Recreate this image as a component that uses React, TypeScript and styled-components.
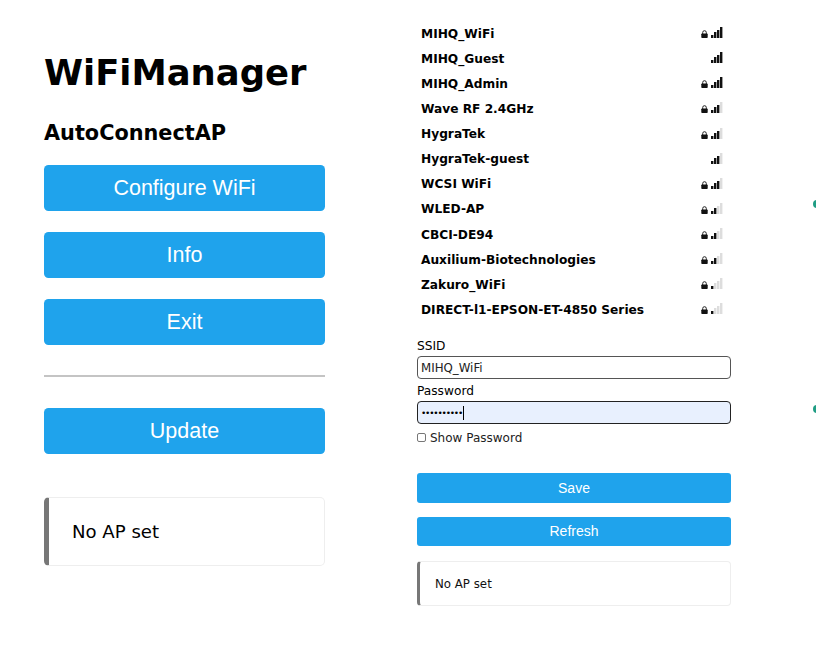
import React from 'react';
import styled, { createGlobalStyle } from 'styled-components';

const GlobalStyle = createGlobalStyle`
  html, body {
    margin: 0;
    padding: 0;
    background: #fff;
    overflow: hidden;
  }
  body {
    font-family: "DejaVu Sans", Verdana, sans-serif;
    color: #000;
  }
`;

const networks = [
  { name: 'MIHQ_WiFi', locked: true, level: 4 },
  { name: 'MIHQ_Guest', locked: false, level: 4 },
  { name: 'MIHQ_Admin', locked: true, level: 4 },
  { name: 'Wave RF 2.4GHz', locked: true, level: 3 },
  { name: 'HygraTek', locked: true, level: 3 },
  { name: 'HygraTek-guest', locked: false, level: 3 },
  { name: 'WCSI WiFi', locked: true, level: 3 },
  { name: 'WLED-AP', locked: true, level: 2 },
  { name: 'CBCI-DE94', locked: true, level: 2 },
  { name: 'Auxilium-Biotechnologies', locked: true, level: 2 },
  { name: 'Zakuro_WiFi', locked: true, level: 1 },
  { name: 'DIRECT-l1-EPSON-ET-4850 Series', locked: true, level: 1 },
];

const Page = styled.div`
  position: relative;
  width: 816px;
  height: 645px;
  display: flex;
  gap: 92px;
  padding-left: 44px;
  box-sizing: border-box;
  overflow: hidden;
`;

const LeftColumn = styled.div`
  width: 281px;
  padding-top: 50px;
`;

const RightColumn = styled.div`
  width: 314px;
  padding-top: 21px;
`;

const Title = styled.h1`
  margin: 0;
  font-size: 35.4px;
  line-height: 46px;
  font-weight: 700;
`;

const Subtitle = styled.h3`
  margin: 25px 0 20px;
  font-size: 20.8px;
  line-height: 24px;
  font-weight: 700;
`;

const BigButton = styled.button`
  display: block;
  width: 100%;
  height: 45.6px;
  margin: 0 0 21.4px;
  padding: 2px 0 0;
  border: 0;
  border-radius: 4.5px;
  background: #1fa3ec;
  color: #fff;
  font-family: "Liberation Sans", Arial, sans-serif;
  font-size: 21.5px;
`;

const Rule = styled.hr`
  height: 2px;
  margin: 30.9px 0 30.5px;
  border: 0;
  background: #c4c4c4;
`;

const BigMessage = styled.div`
  box-sizing: border-box;
  display: flex;
  align-items: center;
  height: 69px;
  margin-top: 43px;
  padding-left: 23px;
  border: 1px solid #eee;
  border-left: 5px solid #777;
  border-radius: 5px;
  font-size: 18.1px;
`;

const NetworkRow = styled.div`
  display: flex;
  align-items: center;
  justify-content: space-between;
  height: 25.13px;
  padding: 0 8px 0 4px;
`;

const NetworkName = styled.span`
  font-size: 12.2px;
  font-weight: 700;
`;

const SignalIcon = styled.svg`
  display: block;
  width: 22px;
  height: 11px;
  margin-top: -2px;
`;

const Form = styled.div`
  margin-top: 16.5px;
`;

const FieldLabel = styled.label`
  display: block;
  font-size: 12.2px;
  line-height: 15px;
`;

const TextField = styled.input`
  display: block;
  box-sizing: border-box;
  width: 100%;
  height: 23px;
  margin: 2px 0 5px;
  padding: 0 3px;
  border: 1px solid #555;
  border-radius: 4px;
  outline: none;
  background: #fff;
  color: #222;
  font-family: "DejaVu Sans", Verdana, sans-serif;
  font-size: 11.8px;
`;

const PasswordValue = styled.span`
  letter-spacing: -1.2px;
  font-size: 9px;
`;

const Caret = styled.span`
  display: inline-block;
  width: 1px;
  height: 14px;
  margin-left: 1px;
  vertical-align: middle;
  background: #000;
`;

const PasswordField = styled.div`
  box-sizing: border-box;
  display: flex;
  align-items: center;
  height: 23px;
  margin-top: 2px;
  padding: 0 3px;
  border: 1.5px solid #222;
  border-radius: 4px;
  background: #e8f0fe;
`;

const ShowRow = styled.label`
  display: flex;
  align-items: center;
  gap: 4px;
  margin-top: 6.5px;
  font-size: 12px;
  line-height: 15px;
  color: #222;
`;

const Box = styled.span`
  box-sizing: border-box;
  width: 9px;
  height: 9px;
  margin-top: -2px;
  border: 1px solid #777;
  border-radius: 2px;
`;

const SmallButton = styled.button<{ $top: number }>`
  display: block;
  width: 100%;
  height: 29.6px;
  margin: ${(p) => p.$top}px 0 0;
  padding: 0;
  border: 0;
  border-radius: 3px;
  background: #1fa3ec;
  color: #fff;
  font-family: "Liberation Sans", Arial, sans-serif;
  font-size: 14px;
`;

const SmallMessage = styled.div`
  box-sizing: border-box;
  display: flex;
  align-items: center;
  height: 45px;
  margin-top: 15px;
  padding-left: 15px;
  border: 1px solid #eee;
  border-left: 3.5px solid #777;
  border-radius: 4px;
  font-size: 11.8px;
  color: #111;
`;

const EdgeDot = styled.span<{ $top: number }>`
  position: absolute;
  left: 813px;
  top: ${(p) => p.$top}px;
  width: 8px;
  height: 8px;
  border-radius: 50%;
  background: #1f9d84;
`;

const Signal: React.FC<{ locked: boolean; level: number }> = ({ locked, level }) => {
  const bars = [
    { x: 10, y: 8, h: 3 },
    { x: 13, y: 5, h: 6 },
    { x: 16, y: 3, h: 8 },
    { x: 19, y: 0, h: 11 },
  ];
  return (
    <SignalIcon viewBox="0 0 22 11">
      {locked && (
        <g>
          <path d="M1.7 7V5.5a1.8 1.8 0 0 1 3.6 0V7" fill="none" stroke="#222" strokeWidth="1" />
          <rect x="0.3" y="6.5" width="6.4" height="4.5" rx="0.8" fill="#111" />
        </g>
      )}
      {bars.map((b, i) => (
        <rect key={i} x={b.x} y={b.y} width="2.4" height={b.h} fill={i < level ? '#111' : '#ddd'} />
      ))}
    </SignalIcon>
  );
};

const App: React.FC = () => (
  <Page>
    <GlobalStyle />
    <LeftColumn>
      <Title>WiFiManager</Title>
      <Subtitle>AutoConnectAP</Subtitle>
      <BigButton>Configure WiFi</BigButton>
      <BigButton>Info</BigButton>
      <BigButton>Exit</BigButton>
      <Rule />
      <BigButton>Update</BigButton>
      <BigMessage>No AP set</BigMessage>
    </LeftColumn>
    <RightColumn>
      {networks.map((n) => (
        <NetworkRow key={n.name}>
          <NetworkName>{n.name}</NetworkName>
          <Signal locked={n.locked} level={n.level} />
        </NetworkRow>
      ))}
      <Form>
        <FieldLabel>SSID</FieldLabel>
        <TextField defaultValue="MIHQ_WiFi" />
        <FieldLabel>Password</FieldLabel>
        <PasswordField>
          <PasswordValue>••••••••••</PasswordValue>
          <Caret />
        </PasswordField>
        <ShowRow>
          <Box />
          Show Password
        </ShowRow>
        <SmallButton $top={27.5}>Save</SmallButton>
        <SmallButton $top={14}>Refresh</SmallButton>
        <SmallMessage>No AP set</SmallMessage>
      </Form>
    </RightColumn>
    <EdgeDot $top={200} />
    <EdgeDot $top={405} />
  </Page>
);

export default App;
